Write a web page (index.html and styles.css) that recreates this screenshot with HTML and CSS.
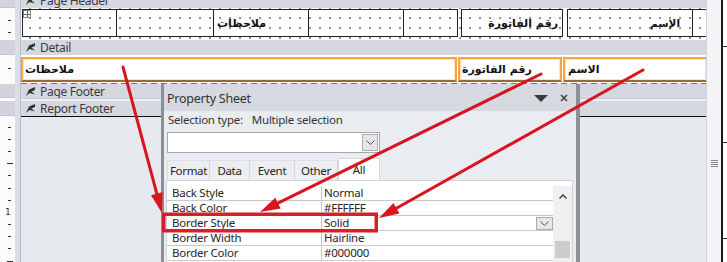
FILE: index.html
```html
<!DOCTYPE html>
<html>
<head>
<meta charset="utf-8">
<link rel="stylesheet" href="styles.css">
</head>
<body>
<div class="screen">
  <div class="canvas">
    <div class="row row-top">
      <div class="rcell rgray"></div><div class="rsep"></div>
      <div class="bar bar-top"><svg class="sec-ic" viewBox="0 0 9 9"><path d="M9 0 L3 2.5 L0 9 L3.5 6 L9 7.5 L5.5 4.5 L9 3 Z"/></svg><span>Page Header</span></div>
    </div>
    <div class="row row-header">
      <div class="rcell rwhite rw-header"><i class="tick"></i><i class="tick"></i></div><div class="rsep"></div>
      <div class="hband">
        <div class="hgroup hg1">
          <div class="hcell hc-a"><span class="move"></span></div>
          <div class="hcell hc-b"></div>
          <div class="hcell hc-c"><span class="ar">ملاحظات</span></div>
          <div class="hcell hc-d"></div>
          <div class="hcell hc-e"></div>
        </div>
        <div class="hgroup hg2"><div class="hcell hc-f"><span class="ar">رقم الفاتورة</span></div></div>
        <div class="hgroup hg3">
          <div class="hcell hc-g"><span class="ar">الإسم</span></div>
          <div class="hcell hc-h"></div>
        </div>
      </div>
    </div>
    <div class="row row-bar15">
      <div class="rcell rgray"></div><div class="rsep"></div>
      <div class="bar"><svg class="sec-ic" viewBox="0 0 9 9"><path d="M9 0 L3 2.5 L0 9 L3.5 6 L9 7.5 L5.5 4.5 L9 3 Z"/></svg><span>Detail</span></div>
    </div>
    <div class="row row-detail">
      <div class="rcell rwhite rw-detail"><i class="tick"></i></div><div class="rsep"></div>
      <div class="dband">
        <div class="dboxes">
          <div class="dbox db1"><span class="ar">ملاحظات</span></div>
          <div class="dbox db2"><span class="ar">رقم الفاتورة</span></div>
          <div class="dbox db3"><span class="ar">الاسم</span></div>
        </div>
        <div class="dashline"></div>
      </div>
    </div>
    <div class="row row-bar14">
      <div class="rcell rgray"></div><div class="rsep"></div>
      <div class="bar"><svg class="sec-ic" viewBox="0 0 9 9"><path d="M9 0 L3 2.5 L0 9 L3.5 6 L9 7.5 L5.5 4.5 L9 3 Z"/></svg><span>Page Footer</span></div>
    </div>
    <div class="row row-sep">
      <div class="rcell rwhite"></div><div class="rsep"></div>
      <div class="barsep"></div>
    </div>
    <div class="row row-bar15">
      <div class="rcell rgray"></div><div class="rsep"></div>
      <div class="bar"><svg class="sec-ic" viewBox="0 0 9 9"><path d="M9 0 L3 2.5 L0 9 L3.5 6 L9 7.5 L5.5 4.5 L9 3 Z"/></svg><span>Report Footer</span></div>
    </div>
    <div class="row row-empty">
      <div class="rcell rwhite rw-empty">
        <i class="tick"></i><i class="tick"></i><i class="tick"></i><i class="tick long"></i>
        <i class="tick"></i><i class="tick"></i><i class="tick"></i><i class="tick num">1</i>
        <i class="tick"></i><i class="tick"></i><i class="tick"></i><i class="tick long"></i>
      </div><div class="rsep"></div>
      <div class="empty"></div>
    </div>
  </div>
  <div class="vscroll"><span class="grip"></span></div>
  <div class="edge"><i></i><i></i><i></i></div>
</div>

<div class="psheet">
  <div class="ps-title">
    <span>Property Sheet</span>
    <div class="ps-ctrls">
      <svg class="ps-tri" viewBox="0 0 14 7"><path d="M0 0 H14 L7 7 Z"/></svg>
      <svg class="ps-x" viewBox="0 0 8 8"><path d="M1 1 L7 7 M7 1 L1 7"/></svg>
    </div>
  </div>
  <div class="ps-sel"><span>Selection type:</span><span>Multiple selection</span></div>
  <div class="ps-combo"><span class="dd"><svg viewBox="0 0 9 5"><path d="M0.5 0.5 L4.5 4.5 L8.5 0.5"/></svg></span></div>
  <div class="ps-tabs">
    <span class="tab t-format">Format</span>
    <span class="tab t-data">Data</span>
    <span class="tab t-event">Event</span>
    <span class="tab t-other">Other</span>
    <span class="tab t-all">All</span>
  </div>
  <div class="ps-grid">
    <div class="pg-rows">
      <div class="pg-row"><span class="pn">Back Style</span><span class="pv">Normal</span></div>
      <div class="pg-row"><span class="pn">Back Color</span><span class="pv">#FFFFFF</span></div>
      <div class="pg-row"><span class="pn">Border Style</span><span class="pv">Solid<span class="dd dd-sm"><svg viewBox="0 0 9 5"><path d="M0.5 0.5 L4.5 4.5 L8.5 0.5"/></svg></span></span></div>
      <div class="pg-row"><span class="pn">Border Width</span><span class="pv">Hairline</span></div>
      <div class="pg-row"><span class="pn">Border Color</span><span class="pv">#000000</span></div>
      <div class="pg-row"><span class="pn"></span><span class="pv"></span></div>
    </div>
    <div class="pg-scroll">
      <svg class="up" viewBox="0 0 8 5"><path d="M0.5 4.5 L4 1 L7.5 4.5"/></svg>
      <span class="thumb"></span>
    </div>
  </div>
</div>

<svg class="arrows" viewBox="0 0 727 262">
  <rect x="163.75" y="214.25" width="212.5" height="16.5" class="hl"/>
  <line x1="123" y1="67" x2="156.8" y2="193.7" class="ln"/>
  <polygon points="162,213 151,195.2 162.6,192.1" class="hd"/>
  <line x1="541" y1="74" x2="277.9" y2="203.2" class="ln"/>
  <polygon points="260,212 275.3,197.8 280.6,208.6" class="hd"/>
  <line x1="643" y1="70" x2="396.4" y2="208.2" class="ln"/>
  <polygon points="379,218 393.5,203 399.4,213.4" class="hd"/>
</svg>
</body>
</html>
```

FILE: styles.css
```css
* { box-sizing: border-box; margin: 0; padding: 0; }
html, body { width: 727px; height: 262px; overflow: hidden; }
body {
  position: relative;
  background: #e6e9ee;
  font-family: "Noto Sans", "Open Sans", sans-serif;
  color: #222;
}
.screen { display: flex; height: 262px; }
.canvas { width: 706px; flex: none; display: flex; flex-direction: column; }
.row { display: flex; flex: none; }

/* vertical ruler */
.rcell { width: 15px; flex: none; }
.rgray { background: #d2d3dc; border-bottom: 1px solid #c4c5ce; }
.rwhite { background: #fbfbfc; display: flex; flex-direction: column; }
.rsep { width: 6px; flex: none; background: #dcdde6; border-right: 1px solid #b8bbc5; }
.tick { display: flex; align-items: center; height: 12px; flex: none; font-style: normal; }
.tick::before { content: ""; display: block; width: 3px; height: 1px; margin-left: 8px; background: #333; }
.tick.long::before { width: 6px; margin-left: 7px; }
.tick.num::before { display: none; }
.tick.num { font-size: 9px; line-height: 1; padding-left: 5px; font-family: "DejaVu Sans", sans-serif; color: #333; }
.rw-header { padding-top: 6px; }
.rw-detail { padding-top: 7px; }
.rw-empty { padding-top: 5px; }
.rw-empty .tick { height: 12.2px; }

/* section bars */
.bar {
  flex: 1;
  background: #d6d8e1;
  display: flex;
  align-items: center;
  padding-left: 5px;
  font-size: 12px;
  letter-spacing: -0.3px;
  color: #3a3a3a;
  overflow: hidden;
}
.sec-ic { width: 9px; height: 9px; fill: #333; margin-right: 5px; flex: none; }
.row-top { height: 8px; overflow: hidden; }
.bar-top { align-items: flex-start; }
.bar-top .sec-ic { margin-top: -4px; }
.bar-top span { line-height: 14px; margin-top: -6px; }
.row-bar15 { height: 15px; }
.row-bar14 { height: 14px; }
.row-sep { height: 3px; }
.barsep { flex: 1; background: #eef0f4; border-top: 1px solid #c5c8d0; }

/* page header band */
.row-header { height: 32px; }
.hband {
  flex: 1;
  background-color: #fff;
  background-image: radial-gradient(circle, #555 0.6px, transparent 0.9px);
  background-size: 10px 10px;
  background-position: 4px 5px;
  display: flex;
  align-items: flex-start;
  padding: 1px 0 0 1px;
}
.hgroup { display: flex; height: 28px; border: 1px solid #222; border-right: none; }
.hg1 { width: 436px; border-right: 1px solid #222; }
.hg2 { width: 102px; margin-left: 3px; border-right: 1px solid #222; }
.hg3 { flex: 1; margin-left: 4px; }
.hcell { display: flex; align-items: center; height: 100%; border-right: 1px solid #222; }
.hc-a { width: 94px; align-items: flex-start; }
.hc-b { width: 97px; }
.hc-c { width: 95px; padding-left: 3px; }
.hc-d { width: 95px; }
.hc-e { flex: 1; border-right: none; }
.hc-f { flex: 1; border-right: none; justify-content: flex-end; padding-right: 4px; }
.hc-g { width: 125px; justify-content: flex-end; padding-right: 12px; }
.hc-h { flex: 1; border-right: none; }
.move { width: 8px; height: 8px; border: 1px solid #888; background: #fff;
  background-image: linear-gradient(#666, #666), linear-gradient(#666, #666);
  background-size: 1px 6px, 6px 1px; background-position: center; background-repeat: no-repeat; }
.ar { font-family: "DejaVu Sans", sans-serif; font-weight: bold; font-size: 11px; color: #111; white-space: nowrap; }
.hc-g .ar { font-size: 10.5px; }

/* detail band */
.row-detail { height: 29px; }
.dband { flex: 1; background: #fff; display: flex; flex-direction: column; padding-top: 2px; }
.dboxes { display: flex; height: 25px; gap: 1px; }
.dbox {
  height: 25px;
  border: 2px solid #f1a544;
  border-bottom-color: #9a6a30;
  box-shadow: inset 0 0 0 1px #fde3bd;
  display: flex; align-items: center;
  background: #fff;
}
.db1 { width: 436px; padding-left: 2px; }
.db2 { width: 104px; padding-left: 2px; }
.db3 { flex: 1; padding-left: 3px; border-right: none; }
.dashline { height: 1px; margin-top: 1px; background: repeating-linear-gradient(90deg, #777 0 6px, #e8e8e8 6px 10px); }

/* empty area */
.row-empty { flex: 1; }
.empty { flex: 1; background: #e6e9ee; border-top: 1px solid #111; }

/* right scrollbar & edge */
.vscroll { width: 15px; flex: none; background: #f4f4f6; border-left: 1px solid #cfd2d8; display: flex; justify-content: center; padding-top: 160px; }
.grip { width: 7px; height: 7px; background: repeating-linear-gradient(#8a8a8a 0 1px, transparent 1px 2px); }
.edge { width: 6px; flex: none; background: #fff; border-left: 2px solid #1a1a1a; display: flex; flex-direction: column; padding-top: 46px; gap: 95px; }
.edge i { display: block; height: 1px; background: #222; }

/* property sheet (floating panel) */
.psheet {
  position: absolute; left: 161px; top: 84px; width: 419px; height: 178px;
  border-left: 3px solid #8b8f96; border-right: 4px solid #8b8f96;
  background: #e9ecf0;
  font-size: 11.5px; letter-spacing: -0.25px; color: #262626;
  display: flex; flex-direction: column;
}
.ps-title { height: 27px; flex: none; background: #d6dae0; display: flex; align-items: center; justify-content: space-between; padding: 1px 0 0 3px; font-size: 12.5px; color: #333; }
.ps-ctrls { display: flex; align-items: center; }
.ps-tri { width: 14px; height: 7px; fill: #3a3a3a; margin-right: 12px; }
.ps-x { width: 8px; height: 8px; stroke: #444; stroke-width: 1.6; margin-right: 8px; }
.ps-sel { height: 16px; flex: none; display: flex; align-items: center; gap: 9px; padding-left: 4px; color: #333; }
.ps-combo { flex: none; margin: 5px 0 0 3px; width: 213px; height: 21px; background: #fff; border: 1px solid #a8a8a8; display: flex; justify-content: flex-end; align-items: center; padding-right: 1px; }
.dd { width: 16px; height: 17px; background: #e6e6e6; border: 1px solid #acacac; display: flex; align-items: center; justify-content: center; }
.dd svg { width: 9px; height: 5px; fill: none; stroke: #555; stroke-width: 1; }
.ps-tabs { flex: none; display: flex; align-items: flex-end; margin: 5px 0 0 3px; height: 22px; }
.tab { height: 20px; display: flex; align-items: center; justify-content: center; background: #eceef1; border-right: 1px solid #d3d6db; border-top: 1px solid #dcdfe3; letter-spacing: -0.3px; }
.t-format { width: 43px; border-left: 1px solid #dcdfe3; }
.t-data { width: 40px; }
.t-event { width: 45px; }
.t-other { width: 43px; }
.t-all { width: 42px; height: 22px; background: #fff; border: 1px solid #d3d6db; border-bottom: none; }
.ps-grid { flex: 1; margin-left: 2px; width: 407px; background: #fff; border: 1px solid #d0d3d8; border-bottom: none; display: flex; padding-top: 5px; overflow: hidden; }
.pg-rows { width: 386px; display: flex; flex-direction: column; }
.pg-row { height: 15px; flex: none; display: flex; border-bottom: 1px solid #c9c9c9; }
.pn { width: 155px; border-right: 1px solid #c9c9c9; padding-left: 5px; line-height: 14px; }
.pv { flex: 1; padding-left: 2px; line-height: 14px; display: flex; justify-content: space-between; }
.dd-sm { width: 17px; height: 13px; margin-top: 1px; }
.pg-scroll { flex: 1; background: #f0f0f0; display: flex; flex-direction: column; align-items: center; padding-top: 8px; }
.up { width: 8px; height: 5px; fill: none; stroke: #333; stroke-width: 1.3; }
.thumb { width: 15px; height: 17px; background: #cdcdcd; margin-top: 42px; flex: none; }

/* annotation overlay */
.arrows { position: absolute; left: 0; top: 0; width: 727px; height: 262px; pointer-events: none; }
.hl { fill: none; stroke: #d81e27; stroke-width: 3.5; }
.ln { stroke: #d8141f; stroke-width: 3; stroke-linecap: round; }
.hd { fill: #d8141f; }
```
